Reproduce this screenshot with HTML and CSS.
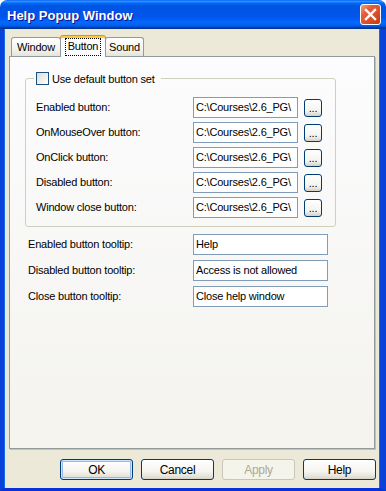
FILE: index.html
```html
<!DOCTYPE html>
<html>
<head>
<meta charset="utf-8">
<title>Help Popup Window</title>
<link rel="stylesheet" href="styles.css">
</head>
<body>
<div class="window">
  <div class="titlebar">
    <span class="title">Help Popup Window</span>
    <div class="close">
      <svg width="19" height="19" viewBox="0 0 19 19"><path d="M5 5 L14 14 M14 5 L5 14" stroke="#fff" stroke-width="2.4" stroke-linecap="square" fill="none"/></svg>
    </div>
  </div>
  <div class="frame">
    <div class="tabs">
      <div class="tab tab-window">Window</div>
      <div class="tab tab-button active"><span class="focus">Button</span></div>
      <div class="tab tab-sound">Sound</div>
    </div>
    <div class="panel">
      <fieldset class="group">
        <legend class="legend"><span class="checkbox"></span><span>Use default button set</span></legend>
        <div class="file-grid">
          <span class="label">Enabled button:</span>
          <div class="textbox">C:\Courses\2.6_PG\</div>
          <div class="dots">...</div>
          <span class="label">OnMouseOver button:</span>
          <div class="textbox">C:\Courses\2.6_PG\</div>
          <div class="dots">...</div>
          <span class="label">OnClick button:</span>
          <div class="textbox">C:\Courses\2.6_PG\</div>
          <div class="dots">...</div>
          <span class="label">Disabled button:</span>
          <div class="textbox">C:\Courses\2.6_PG\</div>
          <div class="dots">...</div>
          <span class="label">Window close button:</span>
          <div class="textbox">C:\Courses\2.6_PG\</div>
          <div class="dots">...</div>
        </div>
      </fieldset>
      <div class="tooltip-grid">
        <span class="label">Enabled button tooltip:</span>
        <div class="textbox">Help</div>
        <span class="label">Disabled button tooltip:</span>
        <div class="textbox">Access is not allowed</div>
        <span class="label">Close button tooltip:</span>
        <div class="textbox">Close help window</div>
      </div>
    </div>
    <div class="actions">
      <div class="btn btn-default">OK</div>
      <div class="btn">Cancel</div>
      <div class="btn btn-disabled">Apply</div>
      <div class="btn">Help</div>
    </div>
  </div>
</div>
</body>
</html>
```

FILE: styles.css
```css
* { box-sizing: border-box; }
html, body { margin: 0; padding: 0; background: #ffffff; }
body {
  font-family: "Liberation Sans", Arial, sans-serif;
  font-size: 11px;
  letter-spacing: -0.2px;
  color: #000;
}
.window {
  width: 386px;
  height: 491px;
  display: flex;
  flex-direction: column;
  border-radius: 7px 7px 0 0;
  overflow: hidden;
}
.titlebar {
  height: 29px;
  flex: 0 0 29px;
  display: flex;
  align-items: center;
  justify-content: space-between;
  padding: 0 5px 0 7px;
  background: linear-gradient(to bottom, #0058ee 0%, #3593ff 4%, #288eff 6%, #127dff 8%, #036ffc 10%, #0262ee 14%, #0057e5 20%, #0054e3 24%, #0055eb 56%, #005bf5 66%, #026afe 76%, #0062ef 86%, #0052d6 92%, #0040ab 94%, #003092 100%);
}
.title {
  color: #fff;
  font-weight: bold;
  font-size: 13px;
  letter-spacing: 0;
  text-shadow: 1px 1px 0 #0f1089;
  padding-top: 1px;
}
.close {
  width: 21px;
  height: 21px;
  border: 1px solid #fff;
  border-radius: 3px;
  display: flex;
  align-items: center;
  justify-content: center;
  background: radial-gradient(circle at 90% 90%, #cc4600 0%, #dc6527 55%, #cd7546 70%, #ffccb2 90%, #ffffff 100%);
  background: linear-gradient(135deg, #f2a183 0%, #e2603e 30%, #dc4f2c 60%, #c43a14 100%);
}
.frame {
  flex: 1;
  display: flex;
  flex-direction: column;
  background: #ece9d8;
  border-left: 4px solid #0842d8;
  border-right: 6px solid #0842d8;
  border-bottom: 3px solid #0831d9;
  box-shadow: inset 1px 0 0 #166aee, inset -1px 0 0 #166aee;
  padding: 7px 0 8px 0;
}
.tabs {
  display: flex;
  align-items: flex-end;
  height: 20px;
  margin-left: 7px;
  position: relative;
  z-index: 2;
}
.tab {
  height: 19px;
  border: 1px solid #919b9c;
  border-bottom: none;
  border-radius: 3px 3px 0 0;
  background: linear-gradient(#ffffff, #f3f3ef 60%, #e6e4da);
  display: flex;
  align-items: center;
  justify-content: center;
  padding-bottom: 1px;
}
.tab-window { width: 50px; }
.tab-sound { width: 39px; }
.tab-button {
  width: 46px;
  height: 21px;
  margin-bottom: -1px;
  background: #fcfcfe;
  border-top: 2px solid #ffc83c;
  box-shadow: 0 -1px 0 #e68b2c;
  border-left-color: #919b9c;
  border-right-color: #919b9c;
  margin-left: -1px;
  margin-right: -1px;
  position: relative;
  z-index: 3;
}
.focus {
  border: 1px dotted #000;
  padding: 1px 2px 2px;
  line-height: 13px;
}
.panel {
  flex: 1;
  margin: 0 5px 0 5px;
  border: 1px solid #919b9c;
  box-shadow: 1px 1px 0 #c5c2b2;
  background: linear-gradient(#fcfcfe, #f4f3ee);
  position: relative;
  z-index: 1;
  display: flex;
  flex-direction: column;
}
.group {
  width: 311px;
  margin: 15px 0 0 15px;
  padding: 12px 0 8px 8px;
  border: 1px solid #d0d0bf;
  border-radius: 3px;
  min-width: 0;
}
.legend {
  padding: 0 6px 0 2px;
  display: flex;
  align-items: center;
  gap: 3px;
  height: 13px;
}
.checkbox {
  width: 13px;
  height: 13px;
  border: 1px solid #1c5180;
  background: linear-gradient(135deg, #dcdcd7 0%, #ffffff 100%);
}
.file-grid {
  margin-left: 2px;
  display: grid;
  grid-template-columns: 151px 105px 18px;
  grid-auto-rows: 21px;
  column-gap: 6px;
  row-gap: 4px;
  align-items: center;
}
.label {
  padding-bottom: 2px;
  white-space: nowrap;
}
.textbox {
  height: 21px;
  border: 1px solid #7f9db9;
  background: #fff;
  padding: 0 2px;
  line-height: 19px;
  white-space: nowrap;
  overflow: hidden;
}
.dots {
  width: 18px;
  height: 18px;
  border: 1px solid #003c74;
  border-radius: 3px;
  background: linear-gradient(#ffffff, #f4f3ee 70%, #d6d0c5);
  display: flex;
  align-items: flex-end;
  justify-content: center;
  line-height: 14px;
  padding-bottom: 1px;
}
.tooltip-grid {
  margin: 7px 0 0 18px;
  display: grid;
  grid-template-columns: 165px 135px;
  grid-auto-rows: 21px;
  row-gap: 5px;
  align-items: center;
}
.actions {
  display: flex;
  justify-content: flex-end;
  gap: 8px;
  margin: 10px 4px 0 0;
}
.btn {
  width: 73px;
  height: 21px;
  border: 1px solid #003c74;
  border-radius: 3px;
  background: linear-gradient(#ffffff, #f5f4f0 60%, #e3e0d5 90%, #d6d0c5);
  display: flex;
  align-items: center;
  justify-content: center;
  font-size: 12px;
  letter-spacing: -0.3px;
}
.btn-default {
  box-shadow: inset 0 0 0 1px #cee7ff, inset 0 0 0 2px #98b8ea;
}
.btn-disabled {
  border-color: #c9c7ba;
  background: #f5f4ea;
  color: #aca899;
}
```
